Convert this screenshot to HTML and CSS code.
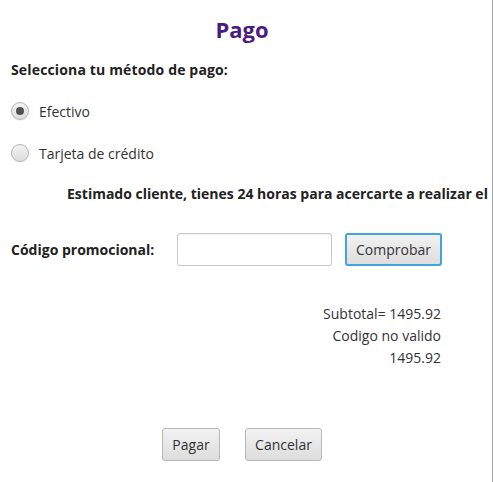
FILE: index.html
```html
<!DOCTYPE html>
<html lang="es">
<head>
<meta charset="utf-8">
<title>Pago</title>
<link rel="stylesheet" href="styles.css">
</head>
<body>
<div class="window">
  <div class="content">
    <h1 class="title">Pago</h1>
    <div class="heading">Selecciona tu método de pago:</div>
    <label class="radio-row row-first">
      <span class="radio checked"><span class="dot"></span></span>
      <span class="radio-label">Efectivo</span>
    </label>
    <label class="radio-row row-second">
      <span class="radio"></span>
      <span class="radio-label">Tarjeta de crédito</span>
    </label>
    <div class="notice">Estimado cliente, tienes 24 horas para acercarte a realizar el</div>
    <div class="promo">
      <span class="promo-label">Código promocional:</span>
      <span class="field"></span>
      <span class="btn btn-focus">Comprobar</span>
    </div>
    <div class="summary">
      <div class="sum-line">Subtotal= 1495.92</div>
      <div class="sum-line">Codigo no valido</div>
      <div class="sum-line">1495.92</div>
    </div>
    <div class="actions">
      <span class="btn btn-pagar">Pagar</span>
      <span class="btn btn-cancel">Cancelar</span>
    </div>
  </div>
</div>
</body>
</html>
```
FILE: styles.css
```css
html, body {
  margin: 0;
  padding: 0;
  background: #ffffff;
}
body {
  font-family: "Open Sans", "Noto Sans", "Liberation Sans", sans-serif;
  color: #333333;
}
.window {
  width: 492px;
  height: 482px;
  border-right: 1px solid #a8a8a8;
  overflow: hidden;
  box-sizing: content-box;
}
.content {
  width: 484px;
  display: flex;
  flex-direction: column;
}
.title {
  margin: 14px 0 0 0;
  height: 30px;
  line-height: 30px;
  font-size: 22px;
  font-weight: 700;
  color: #4b1a82;
  text-align: center;
}
.heading {
  margin: 16px 0 0 11px;
  height: 20px;
  line-height: 20px;
  font-size: 14px;
  font-weight: 700;
  color: #222222;
  letter-spacing: 0.15px;
}
.radio-row {
  display: flex;
  align-items: center;
  margin-left: 11px;
  height: 20px;
  gap: 10px;
}
.row-first { margin-top: 21px; }
.row-second { margin-top: 22px; }
.radio {
  width: 18px;
  height: 18px;
  box-sizing: border-box;
  border-radius: 50%;
  border: 1px solid #b5b5b5;
  background: linear-gradient(#f4f4f4, #dcdcdc);
  display: flex;
  align-items: center;
  justify-content: center;
  box-shadow: 0 1px 1px rgba(0,0,0,0.06);
}
.dot {
  width: 8px;
  height: 8px;
  border-radius: 50%;
  background: #505050;
}
.radio-label {
  font-size: 14px;
  color: #333333;
}
.notice {
  margin: 21px 0 0 67px;
  height: 20px;
  line-height: 20px;
  font-size: 14px;
  font-weight: 700;
  color: #222222;
  white-space: nowrap;
}
.promo {
  display: flex;
  align-items: center;
  margin: 29px 0 0 11px;
  height: 33px;
}
.promo-label {
  width: 166px;
  font-size: 14px;
  font-weight: 700;
  color: #222222;
}
.field {
  width: 155px;
  height: 33px;
  box-sizing: border-box;
  border: 1px solid #c8c8c8;
  border-radius: 3px;
  background: #ffffff;
  box-shadow: inset 0 1px 1px rgba(0,0,0,0.06);
}
.btn {
  display: inline-flex;
  align-items: center;
  justify-content: center;
  height: 33px;
  box-sizing: border-box;
  border: 1px solid #b8b8b8;
  border-radius: 3px;
  background: linear-gradient(#f2f2f2, #dddddd);
  font-size: 14px;
  color: #333333;
}
.btn-focus {
  margin-left: 13px;
  width: 97px;
  border: 2px solid #3fa6dc;
}
.summary {
  margin: 37px 0 0 0;
  padding-right: 43px;
  text-align: right;
  display: flex;
  flex-direction: column;
}
.sum-line {
  height: 22px;
  line-height: 22px;
  font-size: 14px;
  color: #333333;
}
.actions {
  margin-top: 59px;
  display: flex;
  justify-content: center;
  gap: 25px;
}
.btn-pagar { width: 58px; }
.btn-cancel { width: 77px; }
```
